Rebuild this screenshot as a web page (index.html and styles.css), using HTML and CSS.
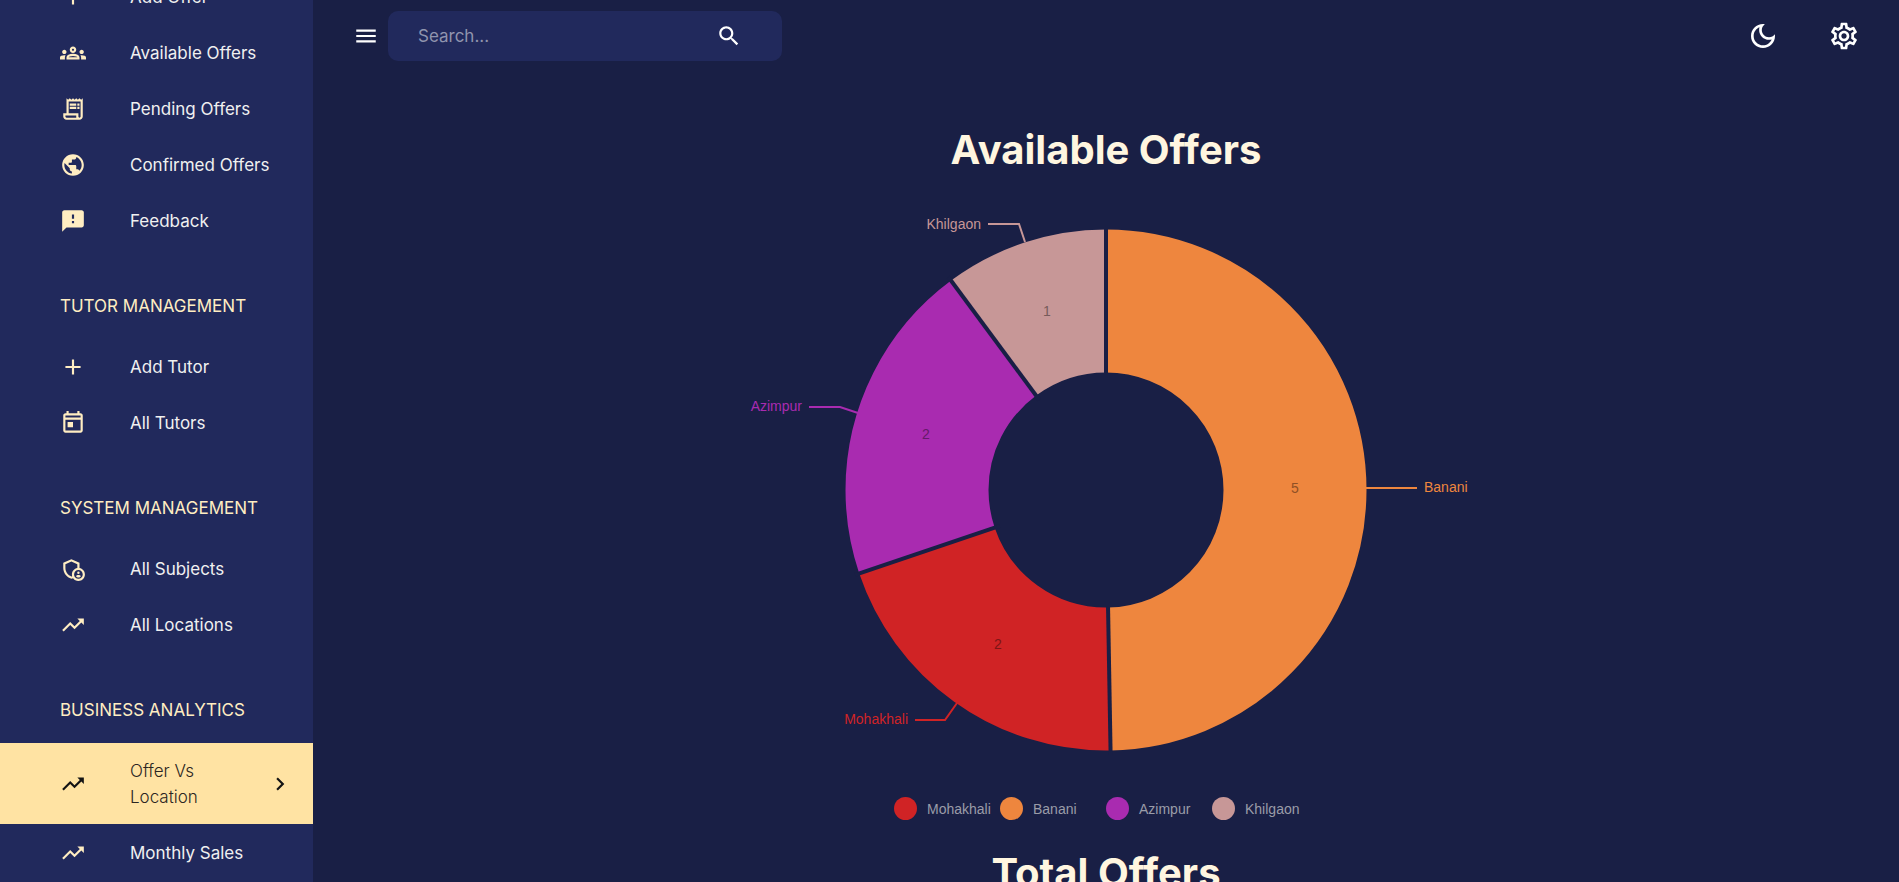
FILE: index.html
```html
<!DOCTYPE html>
<html lang="en">
<head>
<meta charset="utf-8">
<meta name="viewport" content="width=device-width, initial-scale=1">
<title>Available Offers</title>
<link rel="stylesheet" href="styles.css">
</head>
<body>
<svg class="sprite" aria-hidden="true">
  <symbol id="add" viewBox="0 0 24 24"><path d="M19 13h-6v6h-2v-6H5v-2h6V5h2v6h6v2z"/></symbol>
  <symbol id="groups" viewBox="0 0 24 24"><path d="M4 13c1.1 0 2-.9 2-2s-.9-2-2-2-2 .9-2 2 .9 2 2 2zm1.13 1.1c-.37-.06-.74-.1-1.13-.1-.99 0-1.93.21-2.78.58C.48 14.9 0 15.62 0 16.43V18h4.5v-1.61c0-.83.23-1.61.63-2.29zM20 13c1.1 0 2-.9 2-2s-.9-2-2-2-2 .9-2 2 .9 2 2 2zm4 3.43c0-.81-.48-1.53-1.22-1.85-.85-.37-1.79-.58-2.78-.58-.39 0-.76.04-1.13.1.4.68.63 1.46.63 2.29V18H24v-1.57zm-7.76-2.78c-1.17-.52-2.61-.9-4.24-.9s-3.07.39-4.24.9C6.68 14.13 6 15.21 6 16.39V18h12v-1.61c0-1.18-.68-2.26-1.76-2.74zM8.07 16c.09-.23.13-.39.91-.69.97-.38 1.99-.56 3.02-.56s2.05.18 3.02.56c.77.3.81.46.91.69H8.07zM12 8c.55 0 1 .45 1 1s-.45 1-1 1-1-.45-1-1 .45-1 1-1m0-2c-1.66 0-3 1.34-3 3s1.34 3 3 3 3-1.34 3-3-1.34-3-3-3z"/></symbol>
  <symbol id="receipt" viewBox="0 0 24 24"><path d="M19.5 3.5 18 2l-1.5 1.5L15 2l-1.5 1.5L12 2l-1.5 1.5L9 2 7.500 3.500 6 2v14H3v3c0 1.660 1.340 3 3 3h12c1.660 0 3-1.340 3-3V2l-1.500 1.500zM15 20H6c-.55 0-1-.45-1-1v-1h10v2zm4-1c0 .55-.45 1-1 1s-1-.45-1-1v-3H8V5h11v14z"/><path d="M9 7h6v2H9zm7 0h2v2h-2zm-7 3h6v2H9zm7 0h2v2h-2z"/></symbol>
  <symbol id="public" viewBox="0 0 24 24"><path d="M12 2C6.48 2 2 6.48 2 12s4.480 10 10 10 10-4.480 10-10S17.520 2 12 2zm-1 17.930c-3.950-.49-7-3.850-7-7.930 0-.62.08-1.210.21-1.790L9 15v1c0 1.100.9 2 2 2v1.930zm6.900-2.540c-.26-.81-1-1.390-1.900-1.390h-1v-3c0-.55-.45-1-1-1H8v-2h2c.55 0 1-.45 1-1V7h2c1.100 0 2-.9 2-2v-.41c2.930 1.190 5 4.060 5 7.410 0 2.080-.8 3.970-2.100 5.390z"/></symbol>
  <symbol id="feedback" viewBox="0 0 24 24"><path d="M20 2H4c-1.100 0-1.990.9-1.990 2L2 22l4-4h14c1.100 0 2-.9 2-2V4c0-1.100-.9-2-2-2zm-7 12h-2v-2h2v2zm0-4h-2V6h2v4z"/></symbol>
  <symbol id="today" viewBox="0 0 24 24"><path d="M19 3h-1V1h-2v2H8V1H6v2H5c-1.110 0-1.990.9-1.990 2L3 19c0 1.100.89 2 2 2h14c1.100 0 2-.9 2-2V5c0-1.100-.9-2-2-2zm0 16H5V9h14v10zm0-12H5V5h14v2zM7 11h5v5H7z"/></symbol>
  <symbol id="shield" viewBox="0 0 24 24"><circle cx="17" cy="15.500" r="1.120"/><path d="M17 17.500c-.73 0-2.190.36-2.240 1.080.5.710 1.320 1.170 2.240 1.170s1.740-.46 2.240-1.170c-.05-.72-1.510-1.080-2.240-1.080z"/><path d="M18 11.090V6.270L10.500 3 3 6.270v4.910c0 4.540 3.200 8.790 7.500 9.820.55-.13 1.080-.32 1.600-.55C13.180 21.990 14.970 23 17 23c3.310 0 6-2.690 6-6 0-2.970-2.160-5.430-5-5.910zM11 17c0 .56.080 1.110.23 1.620-.24.11-.48.22-.73.3-3.170-1-5.500-4.240-5.500-7.740v-3.600l5.500-2.400 5.500 2.400v3.510c-2.840.48-5 2.940-5 5.910zm6 4c-2.210 0-4-1.790-4-4s1.790-4 4-4 4 1.790 4 4-1.790 4-4 4z"/></symbol>
  <symbol id="trend" viewBox="0 0 24 24"><path d="m16 6 2.290 2.290-4.880 4.880-4-4L2 16.590 3.410 18l6-6 4 4 6.300-6.290L22 12V6z"/></symbol>
  <symbol id="chevron" viewBox="0 0 24 24"><path d="M10 6 8.590 7.410 13.170 12l-4.580 4.590L10 18l6-6z"/></symbol>
  <symbol id="menu" viewBox="0 0 24 24"><path d="M3 18h18v-2H3v2zm0-5h18v-2H3v2zm0-7v2h18V6H3z"/></symbol>
  <symbol id="search" viewBox="0 0 24 24"><path d="M15.500 14h-.79l-.28-.27C15.410 12.590 16 11.110 16 9.500 16 5.910 13.090 3 9.500 3S3 5.910 3 9.500 5.910 16 9.500 16c1.610 0 3.090-.59 4.230-1.570l.27.28v.79l5 4.990L20.490 19l-4.990-5zm-6 0C7.010 14 5 11.990 5 9.500S7.010 5 9.500 5 14 7.010 14 9.500 11.990 14 9.500 14z"/></symbol>
  <symbol id="moon" viewBox="0 0 24 24"><path d="M9.370 5.510c-.18.640-.27 1.310-.27 1.990 0 4.080 3.320 7.400 7.400 7.400.68 0 1.350-.09 1.990-.27C17.450 17.190 14.930 19 12 19c-3.860 0-7-3.140-7-7 0-2.930 1.810-5.450 4.370-6.490zM12 3c-4.970 0-9 4.030-9 9s4.030 9 9 9 9-4.030 9-9c0-.46-.04-.92-.1-1.360-.98 1.370-2.580 2.260-4.400 2.260-2.980 0-5.400-2.420-5.400-5.400 0-1.810.89-3.420 2.260-4.400-.44-.06-.9-.1-1.360-.1z"/></symbol>
  <symbol id="gear" viewBox="0 0 24 24"><path d="M19.430 12.980c.04-.32.07-.64.07-.98s-.03-.66-.07-.98l2.110-1.650c.19-.15.24-.42.12-.64l-2-3.460c-.09-.16-.26-.25-.44-.25-.06 0-.12.010-.17.030l-2.490 1c-.52-.4-1.080-.73-1.690-.98l-.38-2.650C14.460 2.180 14.250 2 14 2h-4c-.25 0-.46.180-.49.420l-.38 2.650c-.61.250-1.170.590-1.690.980l-2.490-1c-.06-.02-.12-.03-.18-.03-.17 0-.34.090-.43.250l-2 3.460c-.13.220-.07.490.12.640l2.110 1.650c-.04.320-.07.650-.07.980s.03.660.07.980l-2.110 1.650c-.19.150-.24.420-.12.640l2 3.460c.09.160.26.250.44.250.06 0 .12-.01.17-.03l2.490-1c.52.400 1.080.730 1.690.980l.38 2.650c.03.240.24.420.49.420h4c.25 0 .46-.18.49-.42l.38-2.650c.61-.25 1.170-.59 1.690-.98l2.490 1c.06.020.12.030.18.030.17 0 .34-.09.43-.25l2-3.460c.12-.22.07-.49-.12-.64l-2.110-1.650zm-1.980-1.710c.04.310.05.520.05.730 0 .21-.02.430-.05.730l-.14 1.130.89.700 1.080.840-.7 1.210-1.270-.51-1.040-.42-.9.680c-.43.320-.84.560-1.250.730l-1.060.430-.16 1.130-.2 1.350h-1.400l-.19-1.350-.16-1.130-1.060-.43c-.43-.18-.83-.41-1.230-.71l-.91-.7-1.060.43-1.270.51-.7-1.210 1.080-.84.890-.7-.14-1.130c-.03-.31-.05-.54-.05-.74s.02-.43.050-.73l.14-1.130-.89-.7-1.080-.84.700-1.210 1.270.51 1.040.42.900-.68c.43-.32.84-.56 1.250-.73l1.060-.43.160-1.130.2-1.350h1.390l.19 1.350.16 1.130 1.060.43c.43.180.83.410 1.230.71l.91.700 1.060-.43 1.270-.51.700 1.210-1.070.85-.89.700.14 1.130zM12 8c-2.210 0-4 1.790-4 4s1.790 4 4 4 4-1.790 4-4-1.790-4-4-4zm0 6c-1.100 0-2-.9-2-2s.9-2 2-2 2 .9 2 2-.9 2-2 2z"/></symbol>
</svg>

<div class="app">
  <nav class="sidebar" aria-label="Main">
    <div class="nav-scroll">
      <ul class="nav-list">
        <li><a class="nav-item" href="#"><svg class="icon"><use href="#add"/></svg><span class="label">Add Offer</span></a></li>
        <li><a class="nav-item" href="#"><svg class="icon"><use href="#groups"/></svg><span class="label">Available Offers</span></a></li>
        <li><a class="nav-item" href="#"><svg class="icon"><use href="#receipt"/></svg><span class="label">Pending Offers</span></a></li>
        <li><a class="nav-item" href="#"><svg class="icon"><use href="#public"/></svg><span class="label">Confirmed Offers</span></a></li>
        <li><a class="nav-item" href="#"><svg class="icon"><use href="#feedback"/></svg><span class="label">Feedback</span></a></li>
      </ul>
      <h2 class="nav-heading">TUTOR MANAGEMENT</h2>
      <ul class="nav-list">
        <li><a class="nav-item" href="#"><svg class="icon"><use href="#add"/></svg><span class="label">Add Tutor</span></a></li>
        <li><a class="nav-item" href="#"><svg class="icon"><use href="#today"/></svg><span class="label">All Tutors</span></a></li>
      </ul>
      <h2 class="nav-heading">SYSTEM MANAGEMENT</h2>
      <ul class="nav-list">
        <li><a class="nav-item" href="#"><svg class="icon"><use href="#shield"/></svg><span class="label">All Subjects</span></a></li>
        <li><a class="nav-item" href="#"><svg class="icon"><use href="#trend"/></svg><span class="label">All Locations</span></a></li>
      </ul>
      <h2 class="nav-heading">BUSINESS ANALYTICS</h2>
      <ul class="nav-list">
        <li><a class="nav-item active" href="#" aria-current="page"><svg class="icon"><use href="#trend"/></svg><span class="label">Offer Vs Location</span><svg class="icon"><use href="#chevron"/></svg></a></li>
        <li><a class="nav-item" href="#"><svg class="icon"><use href="#trend"/></svg><span class="label">Monthly Sales</span></a></li>
      </ul>
    </div>
  </nav>

  <div class="content">
    <header class="topbar">
      <button class="icon-button menu" type="button" aria-label="Toggle menu"><svg class="icon"><use href="#menu"/></svg></button>
      <form class="search" role="search">
        <input class="search-input" type="text" placeholder="Search..." aria-label="Search">
        <button class="icon-button" type="button" aria-label="Search"><svg class="icon"><use href="#search"/></svg></button>
      </form>
      <div class="actions">
        <button class="icon-button" type="button" aria-label="Toggle dark mode"><svg class="icon large"><use href="#moon"/></svg></button>
        <button class="icon-button" type="button" aria-label="Settings"><svg class="icon large"><use href="#gear"/></svg></button>
      </div>
    </header>

    <main class="main">
      <h1 class="title">Available Offers</h1>
      <svg class="chart" viewBox="-420 -290 840 580" role="img" aria-label="Available offers by location">
        <g class="slices" transform="rotate(-90)">
          <circle class="banani" r="189" pathLength="360" stroke-dasharray="179 181"/>
          <circle class="mohakhali" r="189" pathLength="360" stroke-dasharray="72.3 287.7" stroke-dashoffset="-179"/>
          <circle class="azimpur" r="189" pathLength="360" stroke-dasharray="72.2 287.8" stroke-dashoffset="-251.3"/>
          <circle class="khilgaon" r="189" pathLength="360" stroke-dasharray="36.5 323.5" stroke-dashoffset="-323.5"/>
        </g>
        <g class="gaps">
          <path d="M0 -112V-265"/>
          <path d="M0 -112V-265" transform="rotate(179)"/>
          <path d="M0 -112V-265" transform="rotate(251.3)"/>
          <path d="M0 -112V-265" transform="rotate(323.5)"/>
        </g>
        <g class="links">
          <path class="banani" d="M260 -2H311"/>
          <path class="mohakhali" d="M-149 213L-161 230H-191"/>
          <path class="azimpur" d="M-248 -77L-266 -83H-297"/>
          <path class="khilgaon" d="M-81 -248L-87 -266H-118"/>
        </g>
        <g class="link-labels">
          <text class="banani" x="318" y="2">Banani</text>
          <text class="mohakhali end" x="-198" y="234">Mohakhali</text>
          <text class="azimpur end" x="-304" y="-79">Azimpur</text>
          <text class="khilgaon end" x="-125" y="-261">Khilgaon</text>
        </g>
        <g class="values">
          <text class="banani" x="189" y="3">5</text>
          <text class="mohakhali" x="-108" y="159">2</text>
          <text class="azimpur" x="-180" y="-51">2</text>
          <text class="khilgaon" x="-59" y="-174">1</text>
        </g>
      </svg>
      <ul class="legend">
        <li class="mohakhali">Mohakhali</li>
        <li class="banani">Banani</li>
        <li class="azimpur">Azimpur</li>
        <li class="khilgaon">Khilgaon</li>
      </ul>
      <h1 class="title">Total Offers</h1>
    </main>
  </div>
</div>
</body>
</html>
```

FILE: styles.css
```css
:root {
  --page: #191f45;
  --panel: #21295c;
  --cream: #fff6e0;
  --icon: #ffedc2;
  --highlight: #ffe3a3;
}

* { box-sizing: border-box; }

body {
  margin: 0;
  background: var(--page);
  color: #fff;
  font: 400 17px/26px Inter, sans-serif;
}

ul { margin: 0; padding: 0; list-style: none; }

.sprite { position: absolute; width: 0; height: 0; }

.app { display: flex; height: 100vh; overflow: hidden; }

.sidebar {
  flex: none;
  width: 313px;
  overflow: hidden;
  background: var(--panel);
}

.nav-scroll { margin-top: -31px; }

.nav-list { display: flex; flex-direction: column; gap: 1px; }

.nav-item {
  display: flex;
  align-items: center;
  min-height: 55px;
  padding: 15px 20px 14px 60px;
  color: #f0f0f0;
  text-decoration: none;
}

.nav-item .icon { color: var(--icon); }
.nav-item .label { flex: 1; margin-left: 44px; }

.nav-item.active { background: var(--highlight); color: #2b2622; font-weight: 300; }
.nav-item.active .icon { color: #141414; }
.nav-item.active .label { margin-right: 40px; }

.nav-heading {
  margin: 0;
  padding: 45px 0 20px 60px;
  color: var(--icon);
  font-size: 17px;
  font-weight: 400;
}

.icon { flex: none; display: block; width: 26px; height: 26px; fill: currentColor; }
.icon.large { width: 32px; height: 32px; }

.icon-button {
  display: flex;
  padding: 0;
  border: 0;
  background: none;
  color: #fff;
}

.content { flex: 1; min-width: 0; }

.topbar {
  display: flex;
  align-items: center;
  padding: 11px 39px 0 40px;
}

.search {
  display: flex;
  align-items: center;
  width: 394px;
  height: 50px;
  margin-left: 9px;
  padding: 0 40px 0 30px;
  border-radius: 10px;
  background: var(--panel);
}

.search-input {
  flex: 1;
  min-width: 0;
  padding: 0;
  border: 0;
  outline: 0;
  background: none;
  color: #fff;
  font: inherit;
}

.search-input::placeholder { color: #9094ae; }

.actions { display: flex; gap: 49px; margin-left: auto; }

.main { display: flex; flex-direction: column; align-items: center; padding-top: 64px; }

.title {
  margin: 0;
  color: var(--cream);
  font-size: 40px;
  font-weight: 700;
  line-height: 50px;
}

.chart { width: 840px; max-width: 100%; margin-top: 25px; }

.banani { --series: #ee863e; --value: #8f5025; }
.mohakhali { --series: #d02325; --value: #7d1516; }
.azimpur { --series: #a92bb0; --value: #651a6a; }
.khilgaon { --series: #c79797; --value: #775b5b; }

.slices circle { fill: none; stroke: var(--series); stroke-width: 143px; }
.gaps path { stroke: var(--page); stroke-width: 4px; }
.links path { fill: none; stroke: var(--series); stroke-width: 2px; }

.chart text, .legend { font: 14px/22px "Liberation Sans", Arial, sans-serif; }
.link-labels text { fill: var(--series); }
.link-labels .end { text-anchor: end; }
.values text { fill: var(--value); text-anchor: middle; }

.legend { display: grid; grid-template-columns: repeat(4, 106px); margin: 17px 0 28px; color: #9a9ca8; }
.legend li { display: flex; align-items: center; gap: 10px; }
.legend li::before {
  content: "";
  width: 23px;
  height: 23px;
  border-radius: 50%;
  background: var(--series);
}
```
